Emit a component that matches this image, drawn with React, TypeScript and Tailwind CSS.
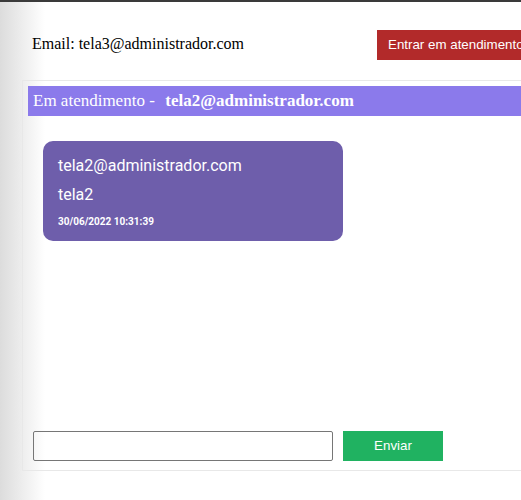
import React from "react";

export default function App() {
  return (
    <div className="relative w-[521px] h-[500px] overflow-hidden bg-white">
      <div className="pointer-events-none absolute inset-y-0 left-0 w-[45px] bg-[linear-gradient(to_right,#dcdcdc,rgba(255,255,255,0))]" />
      <div className="relative w-[580px]">
        <div className="h-[2px] bg-[#3a3a3a]" />
        <div className="flex items-start h-[78px]">
          <span className="ml-[32px] mt-[32px] w-[345px] text-[16px] leading-[20px] text-black font-['Liberation_Serif',serif]">
            Email: tela3@administrador.com
          </span>
          <button className="mt-[28px] h-[30px] w-[170px] bg-[#b22a2a] text-white text-[13.33px] font-['Liberation_Sans',sans-serif] text-left pl-[11px]">
            Entrar em atendimento
          </button>
        </div>
        <div className="ml-[22px] h-[391px] w-[540px] border border-[#e8e8e8] p-[5px] flex flex-col">
          <div className="h-[30px] bg-[#8b7aeb] flex items-center pl-[5px] text-white text-[17px] font-['Liberation_Serif',serif] whitespace-pre">
            <span>Em atendimento -  </span>
            <span className="font-bold ml-[2px]">tela2@administrador.com</span>
          </div>
          <div className="flex-1">
            <div className="mt-[25px] ml-[15px] w-[300px] h-[100px] rounded-[10px] bg-[#6e5eab] text-white font-['Roboto',sans-serif] pl-[15px] pt-[13px] flex flex-col">
              <span className="text-[16px] leading-[24px]">tela2@administrador.com</span>
              <span className="text-[16px] leading-[24px] mt-[5px]">tela2</span>
              <span className="text-[10px] leading-[14px] font-bold mt-[8px]">30/06/2022 10:31:39</span>
            </div>
          </div>
          <div className="flex items-center gap-[10px] ml-[5px] mb-[4px]">
            <input className="w-[300px] h-[30px] border border-[#767676] rounded-[2px] outline-none" />
            <button className="w-[100px] h-[30px] bg-[#20b261] text-white text-[13.33px] font-['Liberation_Sans',sans-serif]">
              Enviar
            </button>
          </div>
        </div>
      </div>
    </div>
  );
}
